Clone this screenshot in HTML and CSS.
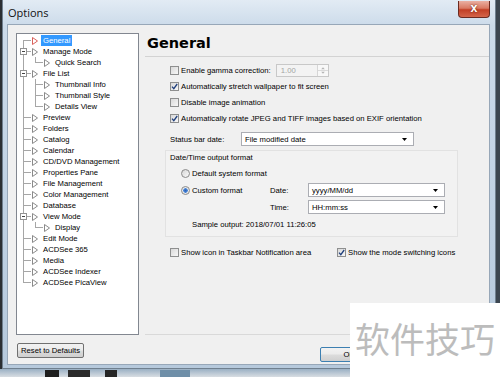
FILE: index.html
```html
<!DOCTYPE html>
<html lang="en">
<head>
    <meta charset="UTF-8">
    <meta name="viewport" content="width=device-width, initial-scale=1.0">
    <title>Options</title>
    <link rel="stylesheet" href="styles.css">
</head>
<body>

    <div class="window">
        <div class="titlebar">
            <span class="title">Options</span>
            <button class="close">X</button>
        </div>

        <div class="client">
            <div class="main">
                <!-- category tree -->
                <div class="tree">
                    <div class="row first"><span class="c1"></span><svg class="tri sel" width="6" height="8" viewBox="0 0 6 8"><path d="M.5 .5 5.5 4 .5 7.5Z"/></svg><span class="label selected">General</span></div>
                    <div class="row"><span class="c1"><i class="exp"></i></span><svg class="tri" width="6" height="8" viewBox="0 0 6 8"><path d="M.5 .5 5.5 4 .5 7.5Z"/></svg><span class="label">Manage Mode</span></div>
                    <div class="row"><span class="c0"></span><span class="c2 end"></span><svg class="tri" width="6" height="8" viewBox="0 0 6 8"><path d="M.5 .5 5.5 4 .5 7.5Z"/></svg><span class="label">Quick Search</span></div>
                    <div class="row"><span class="c1"><i class="exp"></i></span><svg class="tri" width="6" height="8" viewBox="0 0 6 8"><path d="M.5 .5 5.5 4 .5 7.5Z"/></svg><span class="label">File List</span></div>
                    <div class="row"><span class="c0"></span><span class="c2"></span><svg class="tri" width="6" height="8" viewBox="0 0 6 8"><path d="M.5 .5 5.5 4 .5 7.5Z"/></svg><span class="label">Thumbnail Info</span></div>
                    <div class="row"><span class="c0"></span><span class="c2"></span><svg class="tri" width="6" height="8" viewBox="0 0 6 8"><path d="M.5 .5 5.5 4 .5 7.5Z"/></svg><span class="label">Thumbnail Style</span></div>
                    <div class="row"><span class="c0"></span><span class="c2 end"></span><svg class="tri" width="6" height="8" viewBox="0 0 6 8"><path d="M.5 .5 5.5 4 .5 7.5Z"/></svg><span class="label">Details View</span></div>
                    <div class="row"><span class="c1"></span><svg class="tri" width="6" height="8" viewBox="0 0 6 8"><path d="M.5 .5 5.5 4 .5 7.5Z"/></svg><span class="label">Preview</span></div>
                    <div class="row"><span class="c1"></span><svg class="tri" width="6" height="8" viewBox="0 0 6 8"><path d="M.5 .5 5.5 4 .5 7.5Z"/></svg><span class="label">Folders</span></div>
                    <div class="row"><span class="c1"></span><svg class="tri" width="6" height="8" viewBox="0 0 6 8"><path d="M.5 .5 5.5 4 .5 7.5Z"/></svg><span class="label">Catalog</span></div>
                    <div class="row"><span class="c1"></span><svg class="tri" width="6" height="8" viewBox="0 0 6 8"><path d="M.5 .5 5.5 4 .5 7.5Z"/></svg><span class="label">Calendar</span></div>
                    <div class="row"><span class="c1"></span><svg class="tri" width="6" height="8" viewBox="0 0 6 8"><path d="M.5 .5 5.5 4 .5 7.5Z"/></svg><span class="label">CD/DVD Management</span></div>
                    <div class="row"><span class="c1"></span><svg class="tri" width="6" height="8" viewBox="0 0 6 8"><path d="M.5 .5 5.5 4 .5 7.5Z"/></svg><span class="label">Properties Pane</span></div>
                    <div class="row"><span class="c1"></span><svg class="tri" width="6" height="8" viewBox="0 0 6 8"><path d="M.5 .5 5.5 4 .5 7.5Z"/></svg><span class="label">File Management</span></div>
                    <div class="row"><span class="c1"></span><svg class="tri" width="6" height="8" viewBox="0 0 6 8"><path d="M.5 .5 5.5 4 .5 7.5Z"/></svg><span class="label">Color Management</span></div>
                    <div class="row"><span class="c1"></span><svg class="tri" width="6" height="8" viewBox="0 0 6 8"><path d="M.5 .5 5.5 4 .5 7.5Z"/></svg><span class="label">Database</span></div>
                    <div class="row"><span class="c1"><i class="exp"></i></span><svg class="tri" width="6" height="8" viewBox="0 0 6 8"><path d="M.5 .5 5.5 4 .5 7.5Z"/></svg><span class="label">View Mode</span></div>
                    <div class="row"><span class="c0"></span><span class="c2 end"></span><svg class="tri" width="6" height="8" viewBox="0 0 6 8"><path d="M.5 .5 5.5 4 .5 7.5Z"/></svg><span class="label">Display</span></div>
                    <div class="row"><span class="c1"></span><svg class="tri" width="6" height="8" viewBox="0 0 6 8"><path d="M.5 .5 5.5 4 .5 7.5Z"/></svg><span class="label">Edit Mode</span></div>
                    <div class="row"><span class="c1"></span><svg class="tri" width="6" height="8" viewBox="0 0 6 8"><path d="M.5 .5 5.5 4 .5 7.5Z"/></svg><span class="label">ACDSee 365</span></div>
                    <div class="row"><span class="c1"></span><svg class="tri" width="6" height="8" viewBox="0 0 6 8"><path d="M.5 .5 5.5 4 .5 7.5Z"/></svg><span class="label">Media</span></div>
                    <div class="row"><span class="c1"></span><svg class="tri" width="6" height="8" viewBox="0 0 6 8"><path d="M.5 .5 5.5 4 .5 7.5Z"/></svg><span class="label">ACDSee Indexer</span></div>
                    <div class="row last"><span class="c1"></span><svg class="tri" width="6" height="8" viewBox="0 0 6 8"><path d="M.5 .5 5.5 4 .5 7.5Z"/></svg><span class="label">ACDSee PicaView</span></div>
                </div>

                <!-- General page -->
                <div class="pane">
                    <h1>General</h1>
                    <div class="opts">
                        <div class="check">
                            <span class="cb"></span>Enable gamma correction:
                            <span class="spin"><span class="num">1.00</span><svg class="arrows" width="11" height="11" viewBox="0 0 11 11"><path d="M0 5.5H11" stroke="#d6d6d6"/><path d="M3.5 4 5.5 2 7.5 4Z M3.5 7 5.5 9 7.5 7Z" fill="#b4b4b4"/></svg></span>
                        </div>
                        <div class="check"><span class="cb"><svg width="7" height="7" viewBox="0 0 7 7"><path d="M1 3.6 2.8 5.6 6.2 1" fill="none" stroke="#1f3f7c" stroke-width="1.3"/></svg></span>Automatically stretch wallpaper to fit screen</div>
                        <div class="check"><span class="cb"></span>Disable image animation</div>
                        <div class="check"><span class="cb"><svg width="7" height="7" viewBox="0 0 7 7"><path d="M1 3.6 2.8 5.6 6.2 1" fill="none" stroke="#1f3f7c" stroke-width="1.3"/></svg></span>Automatically rotate JPEG and TIFF images based on EXIF orientation</div>

                        <div class="status">
                            <span class="status-label">Status bar date:</span>
                            <span class="combo wide"><span>File modified date</span><svg width="5" height="3" viewBox="0 0 5 3"><path d="M0 0H5L2.5 3Z"/></svg></span>
                        </div>

                        <div class="group">
                            <div class="group-title">Date/Time output format</div>
                            <div class="radio-row"><span class="rb"></span>Default system format</div>
                            <div class="custom">
                                <div class="radio-row"><span class="rb on"></span>Custom format</div>
                                <span>Date:</span>
                                <span class="combo"><span>yyyy/MM/dd</span><svg width="5" height="3" viewBox="0 0 5 3"><path d="M0 0H5L2.5 3Z"/></svg></span>
                                <span></span>
                                <span>Time:</span>
                                <span class="combo"><span>HH:mm:ss</span><svg width="5" height="3" viewBox="0 0 5 3"><path d="M0 0H5L2.5 3Z"/></svg></span>
                            </div>
                            <div class="sample">Sample output: 2018/07/01 11:26:05</div>
                        </div>

                        <div class="bottom-checks">
                            <div class="check first-col"><span class="cb"></span>Show icon in Taskbar Notification area</div>
                            <div class="check"><span class="cb"><svg width="7" height="7" viewBox="0 0 7 7"><path d="M1 3.6 2.8 5.6 6.2 1" fill="none" stroke="#1f3f7c" stroke-width="1.3"/></svg></span>Show the mode switching icons</div>
                        </div>
                    </div>
                </div>
            </div>

            <div class="buttons">
                <button class="btn reset">Reset to Defaults</button>
                <button class="btn ok">OK</button>
            </div>
        </div>
    </div>

    <div class="desktop"></div>

    <div class="watermark">软件技巧</div>

</body>
</html>
```

FILE: styles.css
```css
* {
    box-sizing: border-box;
}

body {
    margin: 0;
    width: 500px;
    height: 377px;
    overflow: hidden;
    position: relative;
    background: linear-gradient(90deg, #2b2f33 0, #2b2f33 2px, #3c4650 2px, #3c4650 100%);
    font-family: 'Liberation Sans', Arial, sans-serif;
    font-size: 7.7px;
    color: #000;
}

.window {
    margin-left: 2px;
    width: 494px;
    height: 369px;
    padding: 0 5px 3px 4px;
    display: flex;
    flex-direction: column;
    background: linear-gradient(180deg, #e2ebf4 0%, #ccdbea 7%, #bfd1e3 60%, #b6c9dc 100%);
    border: 1px solid #70808f;
    border-top: none;
}

.titlebar {
    height: 24px;
    flex: none;
    display: flex;
    justify-content: space-between;
    align-items: flex-start;
}

.title {
    padding: 6px 0 0 1px;
    font-family: 'Open Sans', sans-serif;
    font-size: 11px;
    line-height: 14px;
    color: #111;
}

.close {
    margin-top: 1px;
    width: 32px;
    height: 17px;
    padding: 0;
    border: 1px solid #6b2a20;
    border-top: none;
    border-radius: 0 0 4px 4px;
    background: linear-gradient(180deg, #eab0a2 0%, #d97a63 45%, #c23f25 55%, #d4654a 100%);
    color: #fff;
    font-family: 'DejaVu Sans', sans-serif;
    font-weight: bold;
    font-size: 9px;
    text-shadow: 0 0 2px #5a1a10;
}

.client {
    flex: 1;
    background: #f0f0f0;
    border: 1px solid #97a7b8;
    padding: 8px 0 0 8px;
    display: flex;
    flex-direction: column;
}

.main {
    display: flex;
    height: 302px;
}

/* tree */

.tree {
    width: 123px;
    height: 302px;
    flex: none;
    background: #fff;
    border: 1px solid #828790;
    padding-top: 1px;
}

.row {
    display: flex;
    align-items: center;
    height: 11px;
    line-height: 11px;
    white-space: nowrap;
}

.c1,
.c0,
.c2 {
    flex: none;
    height: 11px;
    display: flex;
    align-items: center;
}

.c1 {
    width: 14px;
    background:
        linear-gradient(#a6a6a6, #a6a6a6) 6px 0 / 1px 100% no-repeat,
        linear-gradient(#a6a6a6, #a6a6a6) 6px 5px / 8px 1px no-repeat;
}

.first .c1 {
    background:
        linear-gradient(#a6a6a6, #a6a6a6) 6px 5px / 1px 6px no-repeat,
        linear-gradient(#a6a6a6, #a6a6a6) 6px 5px / 8px 1px no-repeat;
}

.last .c1 {
    background:
        linear-gradient(#a6a6a6, #a6a6a6) 6px 0 / 1px 6px no-repeat,
        linear-gradient(#a6a6a6, #a6a6a6) 6px 5px / 8px 1px no-repeat;
}

.c0 {
    width: 14px;
    background: linear-gradient(#a6a6a6, #a6a6a6) 6px 0 / 1px 100% no-repeat;
}

.c2 {
    width: 12px;
    background:
        linear-gradient(#a6a6a6, #a6a6a6) 4px 0 / 1px 100% no-repeat,
        linear-gradient(#a6a6a6, #a6a6a6) 4px 5px / 8px 1px no-repeat;
}

.c2.end {
    background:
        linear-gradient(#a6a6a6, #a6a6a6) 4px 0 / 1px 6px no-repeat,
        linear-gradient(#a6a6a6, #a6a6a6) 4px 5px / 8px 1px no-repeat;
}

.exp {
    width: 7px;
    height: 7px;
    margin-left: 3px;
    border: 1px solid #929292;
    background: linear-gradient(#444, #444) 1px 2px / 3px 1px no-repeat, #fff;
}

.tri {
    flex: none;
    margin-left: 1px;
}

.tri path {
    fill: #fff;
    stroke: #8a8a8a;
}

.tri.sel path {
    stroke: #d9605a;
}

.label {
    margin-left: 3px;
    padding: 0 2px;
}

.label.selected {
    background: #3399ff;
    color: #fff;
}

/* right pane */

.pane {
    flex: 1;
    margin-left: 6px;
    height: 302px;
    border-bottom: 1px solid #d9d9d9;
}

h1 {
    margin: 0;
    padding: 1px 0 4px 2px;
    font-family: 'DejaVu Sans', sans-serif;
    font-size: 14.5px;
    line-height: 18px;
    font-weight: bold;
    border-bottom: 1px solid #d3d3d3;
}

.opts {
    padding: 5px 0 0 25px;
}

.check {
    display: flex;
    align-items: center;
    height: 16px;
    white-space: nowrap;
}

.cb {
    flex: none;
    width: 9px;
    height: 9px;
    margin-right: 2px;
    border: 1px solid #8e8f8f;
    background: linear-gradient(135deg, #d9d9d9, #f7f7f7);
    display: flex;
    align-items: center;
    justify-content: center;
}

.spin {
    margin-left: 5px;
    width: 53px;
    height: 13px;
    display: flex;
    align-items: center;
    padding-left: 4px;
    border: 1px solid #c8c8c8;
    background: #f3f3f3;
    color: #a3a3a3;
}

.spin .num {
    flex: 1;
}

.spin .arrows {
    border-left: 1px solid #d6d6d6;
    background: #f8f8f8;
}

.status {
    display: flex;
    align-items: center;
    margin-top: 6px;
    height: 14px;
}

.status-label {
    width: 71px;
}

.combo {
    display: flex;
    align-items: center;
    height: 14px;
    padding: 0 6px 0 3px;
    background: #fff;
    border: 1px solid #abadb3;
}

.combo span {
    flex: 1;
}

.combo.wide {
    width: 173px;
}

.group {
    margin: 4px 0 0 -5px;
    width: 293px;
    height: 87px;
    border: 1px solid #e2e2e2;
    background: #f2f2f2;
}

.group-title {
    padding-left: 4px;
    line-height: 13px;
}

.radio-row {
    display: flex;
    align-items: center;
    height: 14px;
    margin: 2px 0 0 15px;
}

.custom .radio-row {
    margin: 0;
}

.rb {
    flex: none;
    width: 9px;
    height: 9px;
    margin-right: 2px;
    border: 1px solid #8a8a8a;
    border-radius: 50%;
    background: linear-gradient(135deg, #d6d6d6, #fafafa);
}

.rb.on {
    background: radial-gradient(circle, #2c62b8 0, #4a86d8 2px, #e8e8e8 2.5px, #f4f4f4 100%);
}

.custom {
    display: grid;
    grid-template-columns: 89px 38px 137px;
    grid-auto-rows: 14px;
    row-gap: 3px;
    align-items: center;
    margin: 3px 0 0 15px;
}

.sample {
    margin: 4px 0 0 26px;
    line-height: 14px;
}

.bottom-checks {
    display: flex;
    margin-top: 7px;
}

.first-col {
    width: 167px;
}

/* dialog buttons */

.buttons {
    display: flex;
    align-items: flex-start;
}

.btn {
    height: 15px;
    padding: 0 2px;
    border: 1px solid #707070;
    border-radius: 2px;
    background: linear-gradient(180deg, #f2f2f2 0%, #ebebeb 48%, #dcdcdc 52%, #cfcfcf 100%);
    font-family: 'Liberation Sans', Arial, sans-serif;
    font-size: 7.7px;
    color: #000;
    white-space: nowrap;
}

.reset {
    margin: 8px 0 0 1px;
    width: 67px;
}

.ok {
    margin: 12px 0 0 236px;
    width: 58px;
    border-color: #3c7fb1;
}

.desktop {
    height: 8px;
    background:
        linear-gradient(#1e1e1e, #1e1e1e) 45px 1px / 14px 7px no-repeat,
        linear-gradient(#2a2a2a, #2a2a2a) 68px 1px / 22px 7px no-repeat,
        linear-gradient(#252525, #252525) 105px 1px / 12px 7px no-repeat,
        linear-gradient(#6f8fa8, #6f8fa8) 160px 1px / 30px 7px no-repeat,
        linear-gradient(180deg, #9ab0c4, #d8dde2);
}

.watermark {
    position: absolute;
    left: 350px;
    top: 303px;
    width: 150px;
    height: 74px;
    padding: 17px 0 0 5px;
    background: #fff;
    color: #bcbcbc;
    font-family: 'Noto Sans CJK SC', sans-serif;
    font-size: 35px;
    line-height: 35px;
    white-space: nowrap;
}
```
